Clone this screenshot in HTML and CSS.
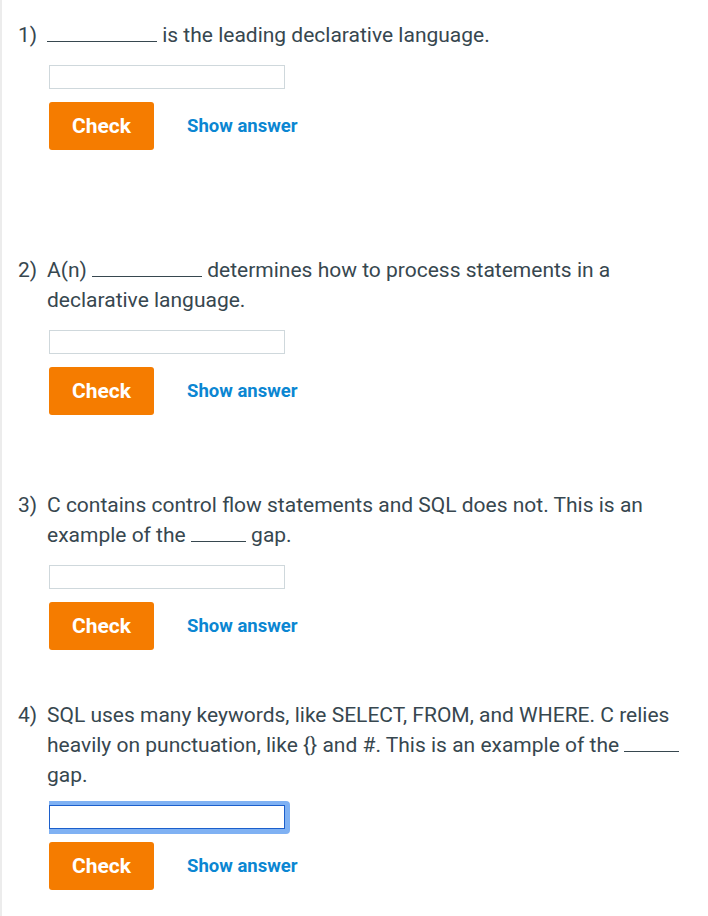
FILE: index.html
```html
<!DOCTYPE html>
<html lang="en">
<head>
<meta charset="utf-8">
<title>Participation activity</title>
<link rel="stylesheet" href="styles.css">
</head>
<body>
<div class="page">
  <div class="question q1">
    <div class="prompt"><span class="num">1)</span><div class="text"><span class="blank wide"></span> is the leading declarative language.</div></div>
    <div class="answer">
      <input class="field" type="text" aria-label="Answer 1">
      <div class="actions"><button class="check">Check</button><button class="show">Show answer</button></div>
    </div>
  </div>
  <div class="question q2">
    <div class="prompt"><span class="num">2)</span><div class="text">A(n) <span class="blank wide"></span> determines how to process statements in a declarative language.</div></div>
    <div class="answer">
      <input class="field" type="text" aria-label="Answer 2">
      <div class="actions"><button class="check">Check</button><button class="show">Show answer</button></div>
    </div>
  </div>
  <div class="question q3">
    <div class="prompt"><span class="num">3)</span><div class="text">C contains control flow statements and SQL does not. This is an example of the <span class="blank short"></span> gap.</div></div>
    <div class="answer">
      <input class="field" type="text" aria-label="Answer 3">
      <div class="actions"><button class="check">Check</button><button class="show">Show answer</button></div>
    </div>
  </div>
  <div class="question q4">
    <div class="prompt"><span class="num">4)</span><div class="text">SQL uses many keywords, like SELECT, FROM, and WHERE. C relies heavily on punctuation, like {} and #. This is an example of the <span class="blank short"></span> gap.</div></div>
    <div class="answer">
      <div class="ring"><input class="field focused" type="text" aria-label="Answer 4"></div>
      <div class="actions"><button class="check">Check</button><button class="show">Show answer</button></div>
    </div>
  </div>
</div>
</body>
</html>
```
FILE: styles.css
```css
html, body {
  margin: 0;
  padding: 0;
  background: #ffffff;
}

body {
  font-family: Roboto, "Liberation Sans", Arial, sans-serif;
  color: #37474f;
}

.page {
  min-height: 916px;
  box-sizing: border-box;
  border-left: 2px solid #ececec;
  padding: 20px 14px 0 16px;
}

.prompt {
  display: flex;
  font-size: 21px;
  line-height: 30px;
}

.num {
  flex: 0 0 29px;
}

.text {
  flex: 1;
  max-width: 647px;
}

.blank {
  display: inline-block;
  vertical-align: baseline;
  border-bottom: 1px solid #37474f;
}

.blank.wide {
  width: 110px;
}

.blank.short {
  width: 55px;
}

.answer {
  margin-left: 31px;
  margin-top: 15px;
}

.field {
  display: block;
  box-sizing: border-box;
  width: 236px;
  height: 24px;
  margin: 0;
  padding: 0 4px;
  border: 1px solid #cfd8dc;
  border-radius: 0;
  background: #fff;
  outline: none;
  font: inherit;
  font-size: 16px;
}

.ring {
  width: 236px;
  margin: -4px -5px -5px 0;
  padding: 4px 5px 5px 0;
  background: #7fb1f3;
  border-radius: 0 4px 4px 0;
}

.field.focused {
  border-color: #1c5fcb;
}

.actions {
  display: flex;
  align-items: center;
  margin-top: 13px;
}

.check {
  width: 105px;
  height: 48px;
  border: 0;
  border-radius: 3px;
  background: #f57c00;
  color: #ffffff;
  font-family: Roboto, "Liberation Sans", Arial, sans-serif;
  font-weight: 700;
  font-size: 21px;
  padding: 0;
}

.show {
  margin-left: 33px;
  padding: 0;
  border: 0;
  background: none;
  color: #0b86d2;
  font-family: Roboto, "Liberation Sans", Arial, sans-serif;
  font-weight: 700;
  font-size: 18.5px;
}

.q2 { margin-top: 105px; }
.q3 { margin-top: 75px; }
.q4 { margin-top: 50px; }
```
